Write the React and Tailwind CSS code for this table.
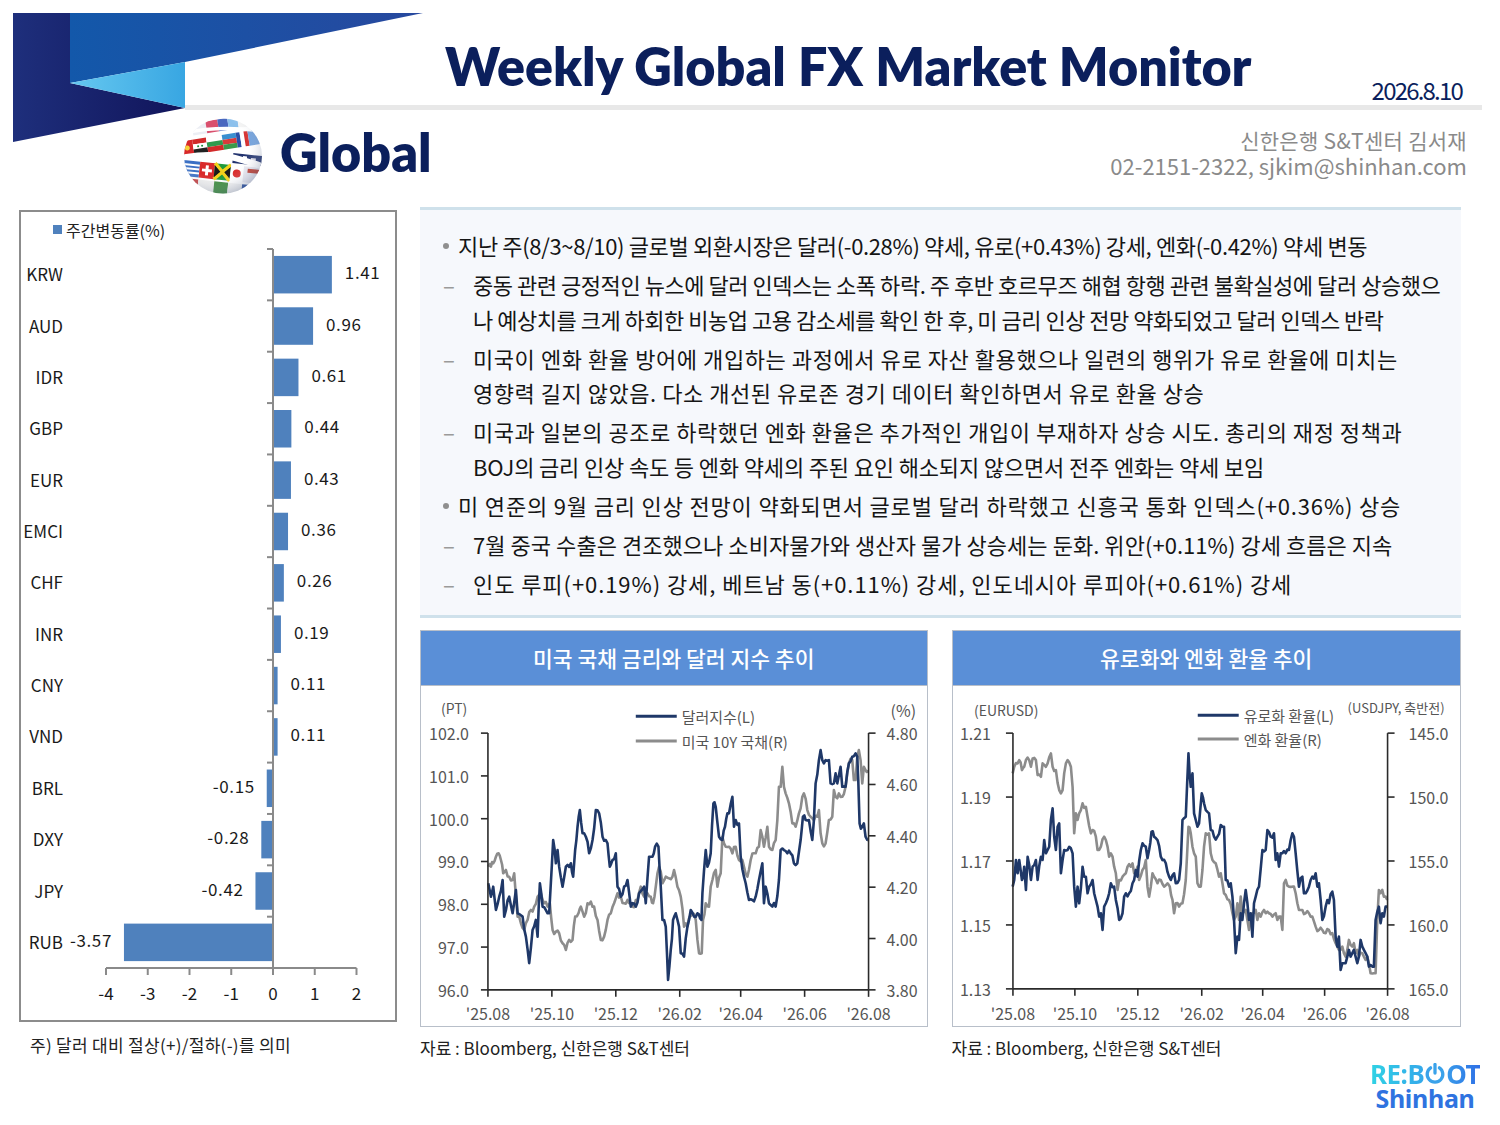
import React from "react";

function mulberry32(a) {
  return function () {
    a |= 0;
    a = (a + 0x6d2b79f5) | 0;
    let t = Math.imul(a ^ (a >>> 15), 1 | a);
    t = (t + Math.imul(t ^ (t >>> 7), 61 | t)) ^ t;
    return ((t ^ (t >>> 14)) >>> 0) / 4294967296;
  };
}

function seriesPath(keys, ox, oy, seed, amp) {
  const r = mulberry32(seed);
  const pts = [];
  for (let i = 0; i < keys.length - 1; i++) {
    const [x0, y0] = keys[i];
    const [x1, y1] = keys[i + 1];
    const n = Math.max(1, Math.round((x1 - x0) / 4.5));
    for (let j = 0; j < n; j++) {
      const t = j / n;
      const x = x0 + (x1 - x0) * t;
      let y = y0 + (y1 - y0) * t;
      if (j > 0) y += (r() - 0.5) * amp;
      pts.push([ox + x / 3, oy + y / 3]);
    }
  }
  const last = keys[keys.length - 1];
  pts.push([ox + last[0] / 3, oy + last[1] / 3]);
  return "M" + pts.map((p) => p[0].toFixed(1) + "," + p[1].toFixed(1)).join("L");
}

const C1_NAVY = [[217,790],[225,830],[232,800],[240,870],[250,830],[260,780],[265,890],[280,830],[290,880],[300,810],[305,880],[320,890],[330,950],[340,1030],[350,930],[360,900],[365,950],[372,790],[380,860],[395,880],[400,880],[412,660],[420,730],[425,690],[430,740],[440,800],[450,740],[465,730],[472,770],[478,690],[485,620],[492,570],[500,640],[510,650],[520,700],[530,660],[540,570],[550,580],[560,650],[575,670],[582,740],[590,720],[600,700],[605,800],[615,830],[625,800],[635,780],[645,860],[660,860],[670,820],[685,800],[690,850],[700,710],[710,710],[718,680],[728,680],[735,800],[740,900],[750,920],[757,1080],[765,990],[772,900],[780,880],[790,920],[795,1000],[805,1010],[815,920],[825,870],[835,890],[845,880],[857,900],[860,820],[870,690],[875,740],[885,700],[893,550],[900,560],[910,650],[920,660],[928,620],[935,580],[940,580],[950,530],[955,620],[960,600],[970,610],[975,710],[985,770],[990,790],[1000,840],[1010,840],[1020,830],[1030,780],[1040,730],[1045,850],[1050,800],[1060,850],[1070,860],[1080,860],[1090,780],[1095,690],[1105,690],[1115,700],[1125,700],[1135,730],[1145,730],[1155,660],[1162,590],[1170,600],[1180,600],[1190,660],[1195,600],[1200,490],[1210,420],[1215,390],[1225,430],[1230,420],[1240,420],[1245,490],[1255,490],[1260,460],[1265,490],[1275,440],[1280,500],[1290,500],[1300,430],[1310,410],[1320,400],[1325,410],[1328,480],[1332,610],[1340,620],[1345,610],[1350,650],[1355,660],[1357,660]];
const C1_GRAY = [[217,740],[225,740],[232,730],[240,710],[248,700],[255,720],[262,760],[270,750],[280,770],[290,780],[295,760],[300,830],[305,890],[315,910],[325,930],[335,900],[345,870],[355,860],[365,830],[375,820],[385,850],[395,860],[402,850],[410,930],[420,935],[430,940],[440,970],[450,990],[460,960],[470,960],[478,890],[488,880],[495,860],[505,890],[515,850],[525,845],[535,860],[545,900],[555,960],[565,950],[575,900],[585,880],[595,850],[605,820],[615,830],[625,850],[635,840],[650,860],[665,840],[675,800],[685,830],[695,820],[705,830],[712,850],[720,800],[725,760],[730,740],[740,790],[750,770],[760,775],[770,770],[775,750],[785,800],[795,830],[805,920],[815,920],[822,890],[830,880],[840,900],[845,960],[850,1000],[858,1000],[862,900],[870,850],[880,860],[885,800],[890,780],[900,750],[905,800],[915,760],[920,650],[930,680],[940,680],[950,700],[960,680],[970,720],[980,720],[985,740],[995,770],[1005,720],[1015,700],[1020,700],[1030,680],[1035,630],[1040,650],[1045,680],[1055,620],[1060,680],[1070,690],[1080,660],[1085,600],[1090,500],[1095,500],[1100,440],[1105,500],[1110,520],[1120,550],[1130,610],[1140,620],[1150,580],[1160,530],[1165,520],[1175,570],[1185,590],[1195,600],[1205,590],[1210,570],[1215,640],[1220,670],[1230,670],[1240,600],[1250,590],[1255,510],[1260,530],[1270,520],[1280,530],[1290,500],[1300,430],[1310,420],[1315,480],[1320,480],[1325,410],[1330,390],[1335,420],[1340,490],[1345,440],[1350,450],[1357,450]];
const C2_NAVY = [[200,800],[205,780],[210,720],[215,760],[220,720],[228,780],[235,740],[240,810],[245,710],[255,780],[260,740],[270,720],[275,780],[285,710],[290,720],[295,660],[300,700],[305,690],[310,680],[315,600],[320,565],[325,650],[330,690],[335,620],[340,610],[345,760],[350,720],[355,690],[365,690],[375,685],[380,700],[385,800],[390,860],[395,800],[400,850],[410,740],[415,770],[420,770],[425,820],[430,800],[440,780],[445,820],[455,860],[460,890],[465,880],[470,930],[475,860],[480,850],[490,820],[495,790],[505,800],[510,840],[520,900],[530,880],[535,830],[540,820],[550,820],[560,790],[570,750],[575,770],[585,690],[590,670],[600,680],[605,715],[610,690],[617,635],[625,650],[635,660],[645,710],[660,730],[670,770],[675,780],[685,760],[690,790],[700,780],[705,730],[710,600],[720,590],[728,400],[735,500],[740,460],[745,580],[750,600],[755,620],[760,610],[768,520],[775,550],[780,570],[790,580],[795,630],[805,650],[815,650],[825,615],[830,620],[835,620],[840,780],[850,800],[855,790],[860,830],[865,900],[870,1000],[875,950],[880,960],[885,880],[890,900],[895,850],[900,810],[905,850],[910,900],[915,880],[920,950],[925,850],[930,830],[940,800],[950,690],[960,690],[965,630],[975,650],[985,640],[990,720],[995,700],[1000,740],[1005,700],[1010,700],[1020,700],[1030,690],[1035,660],[1040,640],[1045,650],[1050,700],[1060,800],[1070,770],[1075,820],[1080,820],[1090,800],[1095,780],[1100,770],[1110,760],[1115,800],[1120,790],[1125,840],[1130,900],[1140,860],[1145,840],[1150,850],[1160,815],[1165,840],[1170,950],[1175,980],[1180,950],[1185,1050],[1190,1030],[1195,1030],[1200,1030],[1205,1010],[1210,990],[1215,1010],[1220,1000],[1225,990],[1230,1010],[1235,1030],[1240,1010],[1245,960],[1250,980],[1255,990],[1260,1000],[1265,1010],[1270,1040],[1280,1040],[1285,1040],[1290,900],[1300,860],[1305,910],[1310,880],[1315,890],[1320,860],[1325,860]];
const C2_GRAY = [[200,460],[205,440],[215,430],[220,420],[228,450],[235,440],[240,420],[250,420],[255,440],[260,415],[270,420],[275,465],[285,470],[290,430],[300,440],[305,430],[315,400],[320,440],[330,450],[340,510],[345,520],[350,510],[355,460],[360,430],[365,420],[375,440],[380,500],[385,640],[390,580],[395,600],[400,580],[405,570],[410,550],[420,560],[425,590],[435,640],[440,630],[450,650],[455,690],[460,690],[465,680],[475,650],[480,660],[490,710],[495,700],[500,710],[505,740],[510,760],[515,810],[520,780],[530,770],[540,760],[545,740],[555,740],[560,730],[565,760],[575,740],[580,780],[590,750],[600,720],[605,800],[610,830],[615,800],[620,760],[625,770],[635,790],[645,780],[655,800],[665,790],[672,800],[680,840],[685,880],[690,850],[700,860],[710,850],[720,780],[728,620],[735,640],[740,680],[745,700],[750,710],[755,790],[760,800],[765,800],[770,750],[775,680],[780,640],[790,640],[795,700],[800,720],[810,730],[820,770],[825,760],[830,790],[835,820],[840,825],[850,840],[860,880],[865,900],[870,890],[875,850],[880,900],[885,830],[890,880],[900,870],[905,900],[910,930],[915,900],[920,880],[930,870],[935,900],[940,880],[945,890],[955,870],[960,880],[970,880],[980,890],[990,880],[995,900],[1000,890],[1005,890],[1010,930],[1015,790],[1020,780],[1030,800],[1040,800],[1045,800],[1050,820],[1055,850],[1060,870],[1070,870],[1080,880],[1090,880],[1100,890],[1110,920],[1120,930],[1130,930],[1140,940],[1150,930],[1160,940],[1170,970],[1175,980],[1180,990],[1185,990],[1190,980],[1200,1010],[1205,990],[1210,960],[1220,980],[1225,970],[1230,1000],[1235,990],[1240,1010],[1250,1000],[1255,1010],[1260,1020],[1265,1010],[1270,1030],[1275,1060],[1285,1060],[1290,1060],[1295,900],[1300,810],[1305,820],[1310,810],[1315,830],[1320,830],[1325,840]];

const P1_NAVY = seriesPath(C1_NAVY, 415, 620, 11, 22);
const P1_GRAY = seriesPath(C1_GRAY, 415, 620, 23, 20);
const P2_NAVY = seriesPath(C2_NAVY, 945, 620, 37, 22);
const P2_GRAY = seriesPath(C2_GRAY, 945, 620, 51, 18);

const BARS = [
  ["KRW", 1.41, "1.41"], ["AUD", 0.96, "0.96"], ["IDR", 0.61, "0.61"], ["GBP", 0.44, "0.44"],
  ["EUR", 0.43, "0.43"], ["EMCI", 0.36, "0.36"], ["CHF", 0.26, "0.26"], ["INR", 0.19, "0.19"],
  ["CNY", 0.11, "0.11"], ["VND", 0.11, "0.11"], ["BRL", -0.15, "-0.15"], ["DXY", -0.28, "-0.28"],
  ["JPY", -0.42, "-0.42"], ["RUB", -3.57, "-3.57"],
];

const ITEMS = [
  { main: true, lines: [["지난 주(8/3~8/10) 글로벌 외환시장은 달러(-0.28%) 약세, 유로(+0.43%) 강세, 엔화(-0.42%) 약세 변동", "tracking-[-0.35px]"]] },
  { main: false, lines: [
    ["중동 관련 긍정적인 뉴스에 달러 인덱스는 소폭 하락. 주 후반 호르무즈 해협 항행 관련 불확실성에 달러 상승했으", "tracking-[-0.46px]"],
    ["나 예상치를 크게 하회한 비농업 고용 감소세를 확인 한 후, 미 금리 인상 전망 약화되었고 달러 인덱스 반락", "tracking-[-0.49px]"],
  ] },
  { main: false, lines: [
    ["미국이 엔화 환율 방어에 개입하는 과정에서 유로 자산 활용했으나 일련의 행위가 유로 환율에 미치는", "tracking-[0.57px]"],
    ["영향력 길지 않았음. 다소 개선된 유로존 경기 데이터 확인하면서 유로 환율 상승", "tracking-[0.53px]"],
  ] },
  { main: false, lines: [
    ["미국과 일본의 공조로 하락했던 엔화 환율은 추가적인 개입이 부재하자 상승 시도. 총리의 재정 정책과", "tracking-[0.53px]"],
    ["BOJ의 금리 인상 속도 등 엔화 약세의 주된 요인 해소되지 않으면서 전주 엔화는 약세 보임", "tracking-[-0.15px]"],
  ] },
  { main: true, lines: [["미 연준의 9월 금리 인상 전망이 약화되면서 글로벌 달러 하락했고 신흥국 통화 인덱스(+0.36%) 상승", "tracking-[0.83px]"]] },
  { main: false, lines: [["7월 중국 수출은 견조했으나 소비자물가와 생산자 물가 상승세는 둔화. 위안(+0.11%) 강세 흐름은 지속", "tracking-[0.05px]"]] },
  { main: false, lines: [["인도 루피(+0.19%) 강세, 베트남 동(+0.11%) 강세, 인도네시아 루피아(+0.61%) 강세", "tracking-[0.93px]"]] },
];

function Banner() {
  return (
    <svg className="absolute left-[13px] top-[13px]" width="411" height="130" viewBox="13 13 411 130">
      <defs>
        <linearGradient id="bNavy" x1="0" x2="1" y1="0" y2="0">
          <stop offset="0" stopColor="#1e2f7c" />
          <stop offset="1" stopColor="#11145a" />
        </linearGradient>
        <linearGradient id="bMid" x1="0" x2="1" y1="0" y2="0">
          <stop offset="0" stopColor="#1358aa" />
          <stop offset="1" stopColor="#27489e" />
        </linearGradient>
        <linearGradient id="bLight" x1="0" x2="1" y1="0" y2="0">
          <stop offset="0" stopColor="#66c8f0" />
          <stop offset="1" stopColor="#38a6e2" />
        </linearGradient>
      </defs>
      <polygon points="13,13 70,13 70,83 185,108 13,142" fill="url(#bNavy)" />
      <polygon points="70,13 423,13 185,62 70,83" fill="url(#bMid)" />
      <polygon points="70,83 185,62 185,108" fill="url(#bLight)" />
    </svg>
  );
}

function Globe() {
  return (
    <svg width="80" height="76" viewBox="0 0 80 76" className="shrink-0">
      <defs>
        <clipPath id="gClip"><ellipse cx="40" cy="38" rx="39" ry="37.5" /></clipPath>
        <radialGradient id="gShade" cx="40%" cy="38%" r="65%">
          <stop offset="0.6" stopColor="#ffffff" stopOpacity="0" />
          <stop offset="1" stopColor="#5a6a8a" stopOpacity="0.35" />
        </radialGradient>
      </defs>
      <g clipPath="url(#gClip)">
        <rect width="80" height="76" fill="#ffffff" />
        <g transform="rotate(-9 40 38)">
          <rect x="14" y="1" width="14" height="12" fill="#eceef4" />
          <rect x="28" y="1" width="12" height="12" fill="#d9506e" />
          <rect x="40" y="1" width="10" height="12" fill="#4a68bf" />
          <rect x="50" y="1" width="10" height="12" fill="#8cc0ec" />
          <rect x="60" y="1" width="10" height="12" fill="#f4f4f4" />
          <rect x="70" y="1" width="12" height="12" fill="#3152a8" />
          <rect x="0" y="17" width="12" height="15" fill="#d8282a" />
          <circle cx="6" cy="24.5" r="2.5" fill="#f7d23a" />
          <rect x="12" y="17" width="14" height="5" fill="#d12a2a" />
          <rect x="12" y="22" width="14" height="5" fill="#ffffff" />
          <rect x="12" y="27" width="14" height="5" fill="#222222" />
          <circle cx="17" cy="24.5" r="1" fill="#1c8a3a" />
          <circle cx="21" cy="24.5" r="1" fill="#1c8a3a" />
          <rect x="26" y="17" width="16" height="5" fill="#ffffff" />
          <rect x="26" y="22" width="16" height="5" fill="#2e9a4e" />
          <rect x="26" y="27" width="16" height="5" fill="#d22a2a" />
          <rect x="42" y="17" width="14" height="5" fill="#3a8fd0" />
          <rect x="42" y="22" width="14" height="5" fill="#d93a3a" />
          <rect x="42" y="27" width="14" height="5" fill="#3a9a4a" />
          <rect x="56" y="17" width="4" height="15" fill="#2a4fa8" />
          <rect x="60" y="17" width="4" height="15" fill="#ffffff" />
          <rect x="64" y="17" width="4" height="15" fill="#d63030" />
          <rect x="68" y="17" width="14" height="15" fill="#6fa0dc" />
        </g>
        <g transform="rotate(6 40 38)">
          <rect x="50" y="34" width="32" height="10" fill="#23346f" />
          <rect x="60" y="36" width="4" height="3" fill="#ffffff" />
          <rect x="68" y="37" width="5" height="3" fill="#d9d9e6" />
          <rect x="0" y="46" width="18" height="16" fill="#3a6fc4" />
          <rect x="0" y="49" width="18" height="2" fill="#ffffff" />
          <rect x="0" y="53" width="18" height="2" fill="#ffffff" />
          <rect x="0" y="57" width="18" height="2" fill="#ffffff" />
          <rect x="18" y="46" width="15" height="16" fill="#d92a2a" />
          <rect x="24" y="49" width="3" height="10" fill="#ffffff" />
          <rect x="20.5" y="52.5" width="10" height="3" fill="#ffffff" />
          <rect x="33" y="46" width="16" height="16" fill="#1f9a3a" />
          <path d="M33 46 L49 62 M49 46 L33 62" stroke="#f3d21c" strokeWidth="3.5" />
          <path d="M33 48 L39 54 L33 60 Z M49 48 L43 54 L49 60 Z" fill="#1a1a1a" />
          <rect x="49" y="46" width="13" height="16" fill="#ffffff" />
          <circle cx="55.5" cy="54" r="4" fill="#d92a2a" />
          <rect x="62" y="46" width="20" height="16" fill="#e8e8f0" />
          <rect x="66" y="48" width="12" height="4" fill="#c0392b" />
          <rect x="0" y="64" width="18" height="14" fill="#c44040" />
          <rect x="18" y="64" width="16" height="14" fill="#ededed" />
          <rect x="34" y="64" width="14" height="14" fill="#3b8a3b" />
          <rect x="48" y="64" width="14" height="14" fill="#f2f2f2" />
          <rect x="62" y="64" width="20" height="14" fill="#2a50a0" />
        </g>
        <path d="M-4 16 Q 38 6 84 14" stroke="#ffffff" strokeWidth="3.5" fill="none" />
        <path d="M-4 40 Q 30 34 52 40 T 84 50" stroke="#ffffff" strokeWidth="6" fill="none" />
        <rect width="80" height="76" fill="url(#gShade)" />
      </g>
    </svg>
  );
}

function BarChart() {
  const x0 = 273;
  const k = 41.75;
  const top = 249;
  const rh = 51.36;
  const axisY = 968;
  return (
    <svg width="374" height="808" viewBox="21 212 374 808" className="block">
      <rect x="53" y="225" width="9" height="9" fill="#4f81bd" />
      <text x="66" y="230" fontSize="16" fill="#222" dominantBaseline="central">주간변동률(%)</text>
      {BARS.map(([name, v, label], i) => {
        const cy = top + (i + 0.5) * rh;
        const bx = v >= 0 ? x0 : x0 + v * k;
        const bw = Math.abs(v) * k;
        return (
          <g key={name}>
            <rect x={bx} y={cy - 18.75} width={bw} height="37.5" fill="#4f81bd" />
            <text x="63" y={cy - 1} fontSize="17" fill="#1a1a1a" textAnchor="end" dominantBaseline="central">{name}</text>
            {v >= 0 ? (
              <text x={x0 + bw + 13} y={cy - 3} fontSize="17" fill="#1a1a1a" letterSpacing="0.6" dominantBaseline="central">{label}</text>
            ) : (
              <text x={bx - 12} y={cy - 3} fontSize="17" fill="#1a1a1a" letterSpacing="0.6" textAnchor="end" dominantBaseline="central">{label}</text>
            )}
          </g>
        );
      })}
      {Array.from({ length: 15 }).map((_, i) => (
        <line key={i} x1="267" x2={x0} y1={top + i * rh} y2={top + i * rh} stroke="#8a8a8a" strokeWidth="2" />
      ))}
      <line x1={x0} x2={x0} y1={top} y2={axisY} stroke="#8a8a8a" strokeWidth="2" />
      <line x1={x0 - 4 * k} x2={x0 + 2 * k} y1={axisY} y2={axisY} stroke="#8a8a8a" strokeWidth="2" />
      {[-4, -3, -2, -1, 0, 1, 2].map((t) => (
        <g key={t}>
          <line x1={x0 + t * k} x2={x0 + t * k} y1={axisY} y2={axisY + 7} stroke="#8a8a8a" strokeWidth="2" />
          <text x={x0 + t * k} y="992" fontSize="17" fill="#1a1a1a" textAnchor="middle" dominantBaseline="central">{t < 0 ? "-" + Math.abs(t) : String(t)}</text>
        </g>
      ))}
    </svg>
  );
}

function LineChart({ cfg }) {
  const { vb, lx, rx, ty, by, xs, xl, leftLabels, rightLabels, leftEnd, rightStart, units, legend, navy, gray } = cfg;
  const n = leftLabels.length;
  const m = rightLabels.length;
  return (
    <svg viewBox={vb} className="block w-full h-full">
      <text x={units[0].x} y={units[0].y} fontSize="14" fill="#555" dominantBaseline="central">{units[0].t}</text>
      <text x={units[1].x} y={units[1].y} fontSize={units[1].fs} fill="#555" dominantBaseline="central">{units[1].t}</text>
      <line x1={legend.x} x2={legend.x + 41} y1={legend.y1} y2={legend.y1} stroke="#1f3868" strokeWidth="3" />
      <text x={legend.x + 46} y={legend.y1} fontSize="15" fill="#555" dominantBaseline="central">{legend.t1}</text>
      <line x1={legend.x} x2={legend.x + 41} y1={legend.y2} y2={legend.y2} stroke="#8c8c8c" strokeWidth="3" />
      <text x={legend.x + 46} y={legend.y2} fontSize="15" fill="#555" dominantBaseline="central">{legend.t2}</text>

      <path d={gray} fill="none" stroke="#8c8c8c" strokeWidth="2.6" strokeLinejoin="round" />
      <path d={navy} fill="none" stroke="#1f3868" strokeWidth="2.6" strokeLinejoin="round" />

      <line x1={lx} x2={lx} y1={ty} y2={by} stroke="#2a2a2a" strokeWidth="1.6" />
      <line x1={rx} x2={rx} y1={ty} y2={by} stroke="#2a2a2a" strokeWidth="1.6" />
      <line x1={lx} x2={rx} y1={by} y2={by} stroke="#2a2a2a" strokeWidth="1.6" />
      {leftLabels.map((t, i) => {
        const y = ty + ((by - ty) * i) / (n - 1);
        return (
          <g key={"l" + i}>
            <line x1={lx - 7} x2={lx} y1={y} y2={y} stroke="#2a2a2a" strokeWidth="1.6" />
            <text x={leftEnd} y={y} fontSize="16" fill="#555" textAnchor="end" dominantBaseline="central">{t}</text>
          </g>
        );
      })}
      {rightLabels.map((t, i) => {
        const y = ty + ((by - ty) * i) / (m - 1);
        return (
          <g key={"r" + i}>
            <line x1={rx} x2={rx + 7} y1={y} y2={y} stroke="#2a2a2a" strokeWidth="1.6" />
            <text x={rightStart} y={y} fontSize="16" fill="#555" dominantBaseline="central">{t}</text>
          </g>
        );
      })}
      {xs.map((x, i) => (
        <g key={"x" + i}>
          <line x1={x} x2={x} y1={by} y2={by + 7} stroke="#2a2a2a" strokeWidth="1.6" />
          <text x={x} y="1013" fontSize="16" fill="#555" textAnchor="middle" dominantBaseline="central">{xl[i]}</text>
        </g>
      ))}
    </svg>
  );
}

const XL = ["'25.08", "'25.10", "'25.12", "'26.02", "'26.04", "'26.06", "'26.08"];

const CFG1 = {
  vb: "420 686 506 340",
  lx: 487, rx: 868, ty: 733, by: 990,
  xs: [487, 551, 615, 679, 740, 804, 868],
  xl: XL,
  leftLabels: ["102.0", "101.0", "100.0", "99.0", "98.0", "97.0", "96.0"],
  rightLabels: ["4.80", "4.60", "4.40", "4.20", "4.00", "3.80"],
  leftEnd: 468, rightStart: 886,
  units: [{ x: 440, y: 708, t: "(PT)" }, { x: 890, y: 710, t: "(%)", fs: 16 }],
  legend: { x: 635, y1: 716, y2: 741, t1: "달러지수(L)", t2: "미국 10Y 국채(R)" },
  navy: P1_NAVY, gray: P1_GRAY,
};

const CFG2 = {
  vb: "952 686 508 340",
  lx: 1012, rx: 1387, ty: 733, by: 989,
  xs: [1012, 1074, 1137, 1201, 1262, 1324, 1387],
  xl: XL,
  leftLabels: ["1.21", "1.19", "1.17", "1.15", "1.13"],
  rightLabels: ["145.0", "150.0", "155.0", "160.0", "165.0"],
  leftEnd: 990, rightStart: 1408,
  units: [{ x: 973, y: 710, t: "(EURUSD)" }, { x: 1347, y: 707, t: "(USDJPY, 축반전)", fs: 13 }],
  legend: { x: 1197, y1: 715, y2: 739, t1: "유로화 환율(L)", t2: "엔화 환율(R)" },
  navy: P2_NAVY, gray: P2_GRAY,
};

function ChartCard({ title, cfg, width }) {
  return (
    <div className={width}>
      <div className="flex flex-col h-[397px] border border-[#b8bfc9] bg-white">
        <div className="h-[55px] shrink-0 bg-[#5a8fd7] border-b border-[#b8bfc9] flex items-center justify-center text-white text-[21.5px] font-medium">
          {title}
        </div>
        <div className="flex-1">
          <LineChart cfg={cfg} />
        </div>
      </div>
      <div className="mt-[11px] text-[17px] leading-[20px] text-[#222]">자료 : Bloomberg, 신한은행 S&amp;T센터</div>
    </div>
  );
}

function Item({ main, lines }) {
  return (
    <div className="flex">
      {main ? (
        <div className="w-[15px] shrink-0 pt-[15px]">
          <span className="block w-[6px] h-[6px] rounded-full bg-[#8f8f8f]" />
        </div>
      ) : (
        <div className="w-[30px] shrink-0 text-[#9a9a9a]">–</div>
      )}
      <div>
        {lines.map(([t, c], i) => (
          <div key={i} className={"whitespace-nowrap " + c}>{t}</div>
        ))}
      </div>
    </div>
  );
}

function PowerO() {
  return (
    <svg width="20" height="22" viewBox="0 0 22 24" className="inline-block mx-[1px] mb-[1px]">
      <path d="M6.2 5.2 A8.6 8.6 0 1 0 15.8 5.2" fill="none" stroke="#3aa2ea" strokeWidth="3.6" strokeLinecap="round" />
      <line x1="11" y1="1.5" x2="11" y2="11" stroke="#3aa2ea" strokeWidth="3.6" strokeLinecap="round" />
    </svg>
  );
}

export default function App() {
  return (
    <div className="relative w-[1500px] h-[1125px] bg-white overflow-hidden font-['Noto_Sans_CJK_KR','Noto_Sans',sans-serif] text-[#151515]">
      <Banner />
      <header className="relative">
        <div className="flex items-start h-[92px] pl-[445px] pr-[38px] pt-[40px]">
          <h1 className="font-['Lato',sans-serif] font-extrabold text-[52px] leading-[52px] text-[#0b1f5c]">
            Weekly Global FX Market Monitor
          </h1>
          <div className="ml-auto mt-[38px] text-[24px] leading-[24px] tracking-[-1.8px] text-[#0b1f5c]">2026.8.10</div>
        </div>
        <div className="ml-[185px] mr-[18px] mt-[13px] h-[5px] bg-[#e8e8e8]" />
        <div className="flex items-start h-[84px] pl-[183px] pr-[33px] pt-[8px]">
          <Globe />
          <div className="ml-[17px] mt-[8px] font-['Lato',sans-serif] font-extrabold text-[52px] leading-[52px] text-[#0b1f5c]">Global</div>
          <div className="ml-auto mt-[10px] text-right text-[#8a8a8a]">
            <div className="text-[21px] leading-[25px] tracking-[0.3px]">신한은행 S&amp;T센터 김서재</div>
            <div className="text-[22px] leading-[25px]">02-2151-2322, sjkim@shinhan.com</div>
          </div>
        </div>
      </header>

      <main className="flex items-start mt-[13px]">
        <div className="ml-[19px] w-[378px] mt-[3px]">
          <div className="h-[812px] border-2 border-[#8c8c8c] bg-white">
            <BarChart />
          </div>
          <div className="mt-[13px] pl-[11px] text-[17px] leading-[20px] tracking-[0.3px] text-[#222]">주) 달러 대비 절상(+)/절하(-)를 의미</div>
        </div>

        <div className="ml-[23px] w-[1041px]">
          <div className="h-[411px] border-y-[3px] border-[#cfe1eb] bg-[#f6f8fc] pl-[23px] pt-[18px]">
            <div className="flex flex-col gap-[4.5px] text-[22px] leading-[34.5px]">
              {ITEMS.map((it, i) => (
                <Item key={i} main={it.main} lines={it.lines} />
              ))}
            </div>
          </div>
          <div className="mt-[12px] flex gap-[24px]">
            <ChartCard title="미국 국채 금리와 달러 지수 추이" cfg={CFG1} width="w-[508px]" />
            <ChartCard title="유로화와 엔화 환율 추이" cfg={CFG2} width="w-[510px]" />
          </div>
        </div>
      </main>

      <footer className="flex flex-col items-end pr-[20px] mt-[4px]">
        <div className="flex flex-col items-center font-['Noto_Sans',sans-serif] font-bold">
          <div className="text-[26px] leading-[24px] tracking-[-0.5px] flex items-end">
            <span className="bg-gradient-to-r from-[#30d2e4] to-[#35a8ea] bg-clip-text text-transparent">RE:B</span>
            <PowerO />
            <span className="bg-gradient-to-r from-[#3a9cea] to-[#2f6fe6] bg-clip-text text-transparent">OT</span>
          </div>
          <div className="text-[25px] leading-[24px] tracking-[-0.3px] text-[#2f73e0]">Shinhan</div>
        </div>
      </footer>
    </div>
  );
}
